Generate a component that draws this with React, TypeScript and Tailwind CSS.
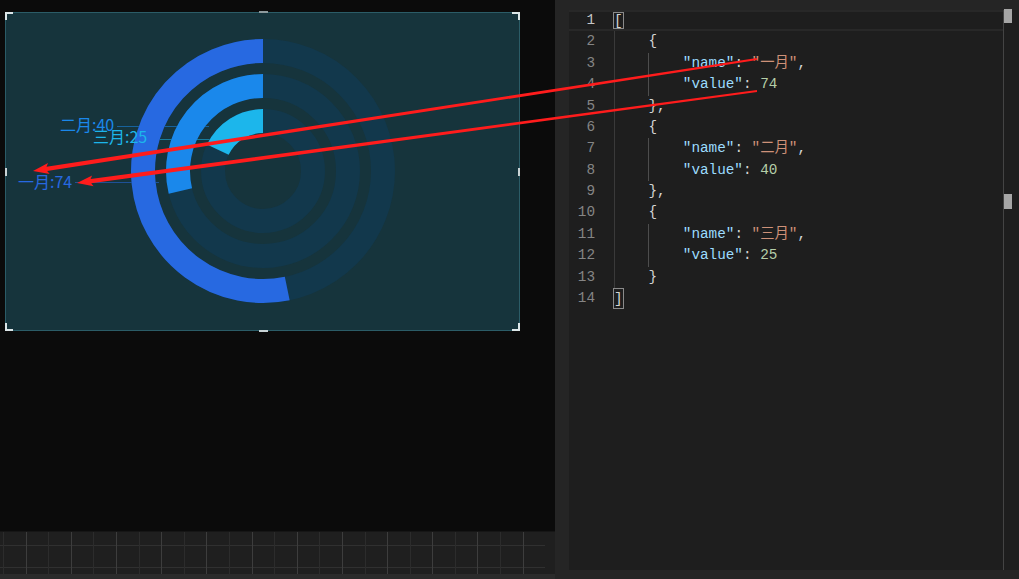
import React from 'react';

type Tok = { t: string; c: string };

interface CodeLine {
  indent: number;
  toks: Tok[];
  box?: boolean;
}

const P = 'text-[#d4d4d4]';
const K = 'text-[#9cdcfe]';
const S = 'text-[#ce9178]';
const N = 'text-[#b5cea8]';

const data = [
  { name: '一月', value: 74 },
  { name: '二月', value: 40 },
  { name: '三月', value: 25 },
];

// build the json lines shown in the editor
const lines: CodeLine[] = [{ indent: 0, toks: [{ t: '[', c: P }], box: true }];
data.forEach((d, i) => {
  lines.push({ indent: 1, toks: [{ t: '{', c: P }] });
  lines.push({
    indent: 2,
    toks: [
      { t: '"name"', c: K },
      { t: ': ', c: P },
      { t: `"${d.name}"`, c: S },
      { t: ',', c: P },
    ],
  });
  lines.push({
    indent: 2,
    toks: [
      { t: '"value"', c: K },
      { t: ': ', c: P },
      { t: String(d.value), c: N },
    ],
  });
  lines.push({ indent: 1, toks: [{ t: i < data.length - 1 ? '},' : '}', c: P }] });
});
lines.push({ indent: 0, toks: [{ t: ']', c: P }], box: true });

// chart geometry (box coords)
const CX = 258;
const CY = 159;
const MAX = 139;

function arcPath(r: number, deg: number) {
  const a = (deg * Math.PI) / 180;
  const x = CX - r * Math.sin(a);
  const y = CY - r * Math.cos(a);
  const large = deg > 180 ? 1 : 0;
  return `M ${CX} ${CY - r} A ${r} ${r} 0 ${large} 0 ${x.toFixed(2)} ${y.toFixed(2)}`;
}

const rings = [
  { r: 120, value: 74, color: '#2769e1' },
  { r: 85, value: 40, color: '#1a88eb' },
  { r: 50, value: 25, color: '#1cb6eb' },
];

function arrowPoints(x0: number, y0: number, x1: number, y1: number) {
  const dx = x1 - x0;
  const dy = y1 - y0;
  const len = Math.hypot(dx, dy);
  const ux = dx / len;
  const uy = dy / len;
  const nx = -uy;
  const ny = ux;
  const bx = x0 + ux * 14;
  const by = y0 + uy * 14;
  const pts = [
    [x0, y0],
    [bx + nx * 5.5 + ux * 2, by + ny * 5.5 + uy * 2],
    [bx + nx * 2.1, by + ny * 2.1],
    [x1 + nx * 1, y1 + ny * 1],
    [x1 - nx * 1, y1 - ny * 1],
    [bx - nx * 2.1, by - ny * 2.1],
    [bx - nx * 5.5 + ux * 2, by - ny * 5.5 + uy * 2],
  ];
  return pts.map((p) => `${p[0].toFixed(1)},${p[1].toFixed(1)}`).join(' ');
}

function Chart() {
  return (
    <svg width={515} height={319} className="block font-['Noto_Sans_CJK_SC',sans-serif]">
      {/* label lines */}
      <line x1={112} y1={114.5} x2={204} y2={114.5} stroke="#1a88eb" strokeOpacity={0.55} strokeWidth={1} />
      <line x1={144} y1={127.5} x2={212} y2={127.5} stroke="#1cb6eb" strokeOpacity={0.55} strokeWidth={1} />
      <line x1={70} y1={170.5} x2={154} y2={170.5} stroke="#2769e1" strokeOpacity={0.55} strokeWidth={1} />
      {/* tracks */}
      {rings.map((r) => (
        <circle key={'t' + r.r} cx={CX} cy={CY} r={r.r} fill="none" stroke="#12384c" strokeWidth={24} />
      ))}
      {/* bars */}
      {rings.map((r) => (
        <path
          key={'b' + r.r}
          d={arcPath(r.r, (r.value / MAX) * 360)}
          fill="none"
          stroke={r.color}
          strokeWidth={24}
        />
      ))}
      <text x={55} y={119} fontSize={16} fill="#1a88eb">二月:40</text>
      <text x={88} y={131} fontSize={16} fill="#1cb6eb">三月:25</text>
      <text x={13} y={176} fontSize={16} fill="#2769e1">一月:74</text>
    </svg>
  );
}

function ChartBox() {
  return (
    <div className="relative w-[515px] h-[319px] bg-[#16343c] border border-[#2b5c67]">
      <div className="-m-px">
        <Chart />
      </div>
      {/* selection corners */}
      <div className="absolute -left-px -top-px w-[8px] h-[8px] border-l-2 border-t-2 border-[#dce6e8]" />
      <div className="absolute -right-px -top-px w-[8px] h-[8px] border-r-2 border-t-2 border-[#dce6e8]" />
      <div className="absolute -left-px -bottom-px w-[8px] h-[8px] border-l-2 border-b-2 border-[#dce6e8]" />
      <div className="absolute -right-px -bottom-px w-[8px] h-[8px] border-r-2 border-b-2 border-[#dce6e8]" />
      {/* mid handles */}
      <div className="absolute left-[253px] -top-[2px] w-[9px] h-[2px] bg-[#8d9a9d]" />
      <div className="absolute left-[253px] -bottom-[2px] w-[9px] h-[2px] bg-[#c9d3d5]" />
      <div className="absolute -left-px top-[155px] w-[2px] h-[8px] bg-[#c9d3d5]" />
      <div className="absolute -right-px top-[155px] w-[2px] h-[8px] bg-[#c9d3d5]" />
    </div>
  );
}

function Ruler() {
  const cells = Array.from({ length: 24 });
  return (
    <div className="flex h-[43px] bg-[#1f1f1f] border-t border-[#161616]">
      <div className="w-[3px] flex flex-col">
        <div className="h-[13px]" />
        <div className="h-[23px] border-y border-[#303030]" />
      </div>
      {cells.map((_, i) => (
        <div
          key={i}
          className={`w-[22.6px] shrink-0 flex flex-col border-l ${
            i % 2 === 0 ? 'border-[#2c2c2c]' : 'border-[#3d3d3d]'
          }`}
        >
          <div className="h-[13px]" />
          <div className="h-[23px] border-y border-[#303030]" />
        </div>
      ))}
    </div>
  );
}

function Editor() {
  return (
    <div className="flex h-full bg-[#1e1e1e] font-['Liberation_Mono','Noto_Sans_CJK_SC',monospace] text-[14.33px]">
      <div className="flex-1 flex flex-col">
        {lines.map((ln, idx) => (
          <div
            key={idx}
            className={`flex h-[21.4px] items-center ${
              idx === 0 ? 'border-y-2 border-[#282828]' : ''
            }`}
          >
            <div
              className={`w-[45px] shrink-0 pr-[19px] text-right ${
                idx === 0 ? 'text-[#c6c6c6]' : 'text-[#858585]'
              }`}
            >
              {idx + 1}
            </div>
            <div className="flex h-full items-center whitespace-pre">
              {Array.from({ length: ln.indent }).map((_, g) => (
                <span
                  key={g}
                  className={`inline-block w-[4ch] h-full border-l ${
                    g === 0 ? 'border-[#3a3a3a]' : 'border-[#4d4d4d]'
                  }`}
                />
              ))}
              {ln.box ? (
                <span className="inline-flex h-full items-center border border-[#8a8a8a] text-[#d4d4d4] leading-none -ml-px">
                  {ln.toks[0].t}
                </span>
              ) : (
                ln.toks.map((tk, j) => (
                  <span key={j} className={tk.c}>
                    {tk.t}
                  </span>
                ))
              )}
            </div>
          </div>
        ))}
      </div>
      <div className="w-[16px] shrink-0 border-l border-[#444444] flex flex-col">
        <div className="w-[8px] h-[14px] -mt-px bg-[#a6a6a6]" />
        <div className="w-[8px] h-[15px] mt-[171px] bg-[#a6a6a6]" />
      </div>
    </div>
  );
}

export default function App() {
  return (
    <div className="relative flex w-[1019px] h-[579px] overflow-hidden bg-[#0b0b0b]">
      {/* canvas side */}
      <div className="w-[555px] shrink-0 flex flex-col">
        <div className="pl-[5px] pt-[12px]">
          <ChartBox />
        </div>
        <div className="flex-1" />
        <Ruler />
        <div className="h-[5px] bg-[#2b2b2b]" />
      </div>

      {/* json editor side */}
      <div className="flex-1 bg-[#252525] pl-[14px] pt-[10px] pb-[9px]">
        <Editor />
      </div>

      {/* annotation arrows */}
      <svg className="absolute inset-0 pointer-events-none" width={1019} height={579}>
        <polygon points={arrowPoints(33, 171, 757, 59)} fill="#ff1c1c" />
        <polygon points={arrowPoints(77, 183, 757, 91)} fill="#ff1c1c" />
      </svg>
    </div>
  );
}
